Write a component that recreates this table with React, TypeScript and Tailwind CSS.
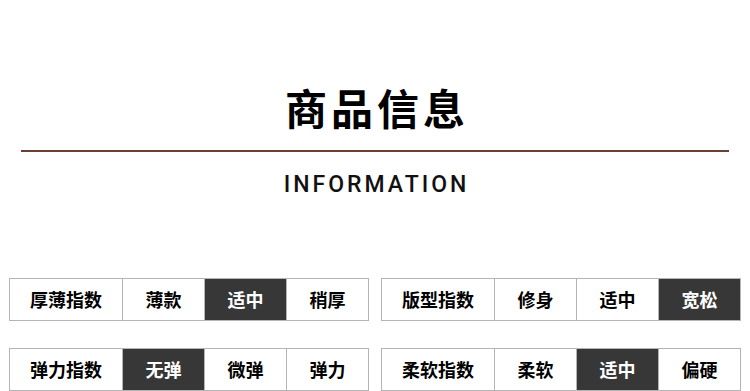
import React from 'react';

type Row = { label: string; options: string[]; active: number };

const rows: Row[][] = [
  [
    { label: '厚薄指数', options: ['薄款', '适中', '稍厚'], active: 1 },
    { label: '版型指数', options: ['修身', '适中', '宽松'], active: 2 },
  ],
  [
    { label: '弹力指数', options: ['无弹', '微弹', '弹力'], active: 0 },
    { label: '柔软指数', options: ['柔软', '适中', '偏硬'], active: 1 },
  ],
];

const cjk = "font-['Noto_Sans_CJK_SC',sans-serif]";

const IndexTable: React.FC<{ row: Row }> = ({ row }) => (
  <div className="flex h-[43px] w-[360px] border border-[#b4b4b4] bg-white">
    <div className="flex w-[112px] items-center justify-center text-[18px] font-bold text-black">
      {row.label}
    </div>
    {row.options.map((opt, i) => (
      <div
        key={opt}
        className={
          'flex items-center justify-center border-l border-[#b4b4b4] text-[18px] font-bold ' +
          (i === 2 ? 'flex-1 ' : 'w-[82px] ') +
          (i === row.active ? 'bg-[#373737] text-white' : 'text-black')
        }
      >
        {opt}
      </div>
    ))}
  </div>
);

export default function App() {
  return (
    <div className={`h-[391px] w-[750px] overflow-hidden bg-white ${cjk}`}>
      <div className="flex flex-col items-center pt-[86px]">
        <h1 className="pl-[4px] text-[42px] font-bold leading-none tracking-[4px] text-black">
          商品信息
        </h1>
      </div>
      <div className="mx-[21px] mt-[22px] h-[2px] bg-[#6b4030]" />
      <div className="mt-[21px] flex justify-center">
        <span className="pl-[3px] font-['Roboto',sans-serif] text-[23px] font-medium leading-none tracking-[3px] text-[#111]">
          INFORMATION
        </span>
      </div>
      <div className="mt-[82px] flex flex-col gap-[27px] pl-[9px]">
        {rows.map((pair, r) => (
          <div key={r} className="flex gap-[12px]">
            {pair.map((row) => (
              <IndexTable key={row.label} row={row} />
            ))}
          </div>
        ))}
      </div>
    </div>
  );
}
